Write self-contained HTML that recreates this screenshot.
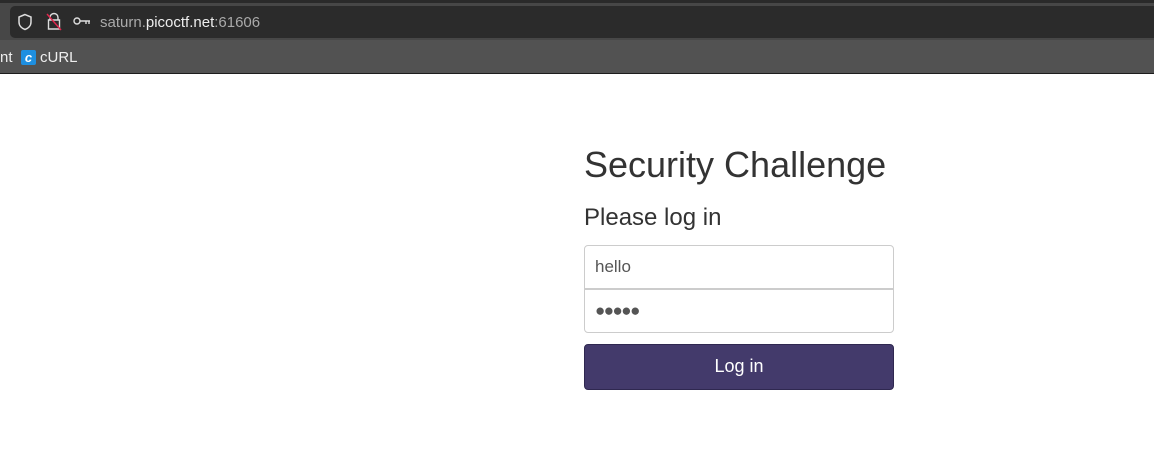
<!DOCTYPE html>
<html><head><style>
body{margin:0;width:1154px;height:454px;background:#fff;font-family:"Liberation Sans",sans-serif;position:relative;overflow:hidden}
.top{position:absolute;left:0;top:0;width:1154px;height:40px;background:#474747;border-top:3px solid #2a2a2a;box-sizing:border-box}
.url{position:absolute;left:10px;top:6px;width:1150px;height:32px;background:#2b2b2b;border-radius:5px}
.bm{position:absolute;left:0;top:40px;width:1154px;height:33px;background:#525252;border-bottom:1px solid #1c1c1c}
.t{position:absolute;color:#fff;font-size:15px}
h1{position:absolute;left:584px;top:144px;margin:0;font-weight:normal;font-size:36px;color:#333}
h2{position:absolute;left:584px;top:204px;margin:0;font-weight:normal;font-size:24px;color:#333}
.in{position:absolute;left:584px;width:310px;height:44px;border:1px solid #ccc;box-sizing:border-box;background:#fff;font-size:17px;color:#555;padding:11px 10px}
.btn{position:absolute;left:584px;top:344px;width:310px;height:46px;background:#433a6b;border:1px solid #2f2850;box-sizing:border-box;border-radius:4px;color:#fff;font-size:18px;text-align:center;line-height:42px}
</style></head><body>
<div class="top"></div>
<div class="url"></div>
<svg style="position:absolute;left:17px;top:13px" width="16" height="18" viewBox="0 0 16 18"><path d="M8 1.5L2 4v5c0 4 3 6.5 6 7.5 3-1 6-3.5 6-7.5V4z" fill="none" stroke="#ddd" stroke-width="1.5"/></svg>
<svg style="position:absolute;left:46px;top:12px" width="16" height="19" viewBox="0 0 16 19"><path d="M4 8V5.5a4 4 0 0 1 8 0V8M2.5 8h11v9h-11z" fill="none" stroke="#ddd" stroke-width="1.4"/><path d="M1 2l14 16" stroke="#e2264d" stroke-width="1.4"/></svg>
<svg style="position:absolute;left:73px;top:16px" width="18" height="10" viewBox="0 0 18 10"><circle cx="4" cy="5" r="3" fill="none" stroke="#ddd" stroke-width="1.4"/><path d="M7 5h10M13 5v3M16 5v3" stroke="#ddd" stroke-width="1.4"/></svg>
<div class="t" style="left:100px;top:14px;color:#aaa">saturn.<span style="color:#eee">picoctf.net</span>:61606</div>
<div class="bm"></div>
<div class="t" style="left:0;top:49px;color:#eee">nt</div>
<div style="position:absolute;left:21px;top:50px;width:15px;height:15px;background:#1e8fe0;border-radius:2px;color:#fff;font-size:13px;font-weight:bold;font-style:italic;text-align:center;line-height:15px">c</div>
<div class="t" style="left:40px;top:49px;color:#eee">cURL</div>
<h1>Security Challenge</h1>
<h2>Please log in</h2>
<div class="in" style="top:245px;border-radius:4px 4px 0 0">hello</div>
<div class="in" style="top:289px;border-radius:0 0 4px 4px;font-size:17px;letter-spacing:-1.5px">●●●●●</div>
<div class="btn">Log in</div>
</body></html>
